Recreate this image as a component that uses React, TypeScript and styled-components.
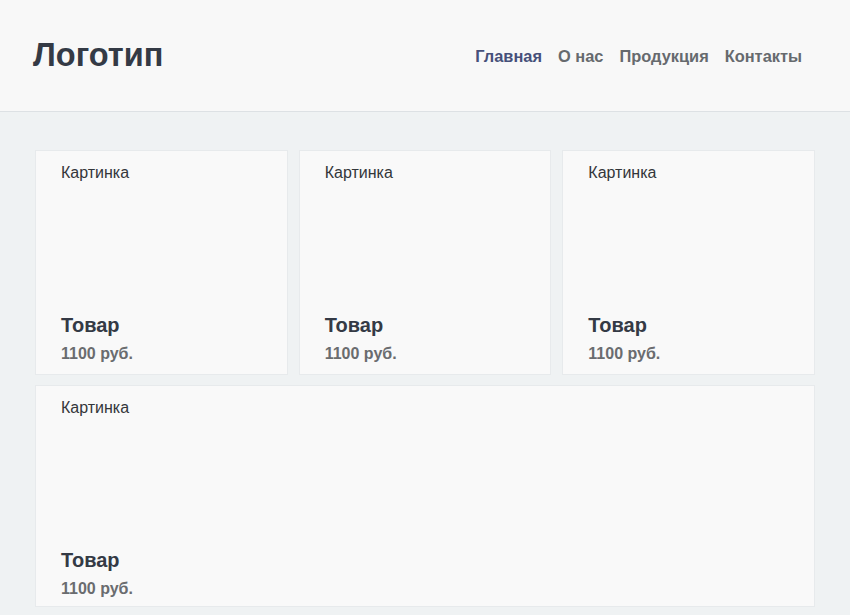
import React from "react";
import styled, { createGlobalStyle } from "styled-components";

const Global = createGlobalStyle`
  html, body { margin: 0; padding: 0; }
  body {
    background: #eff2f3;
    font-family: "Liberation Sans", Arial, Helvetica, sans-serif;
    color: #333;
  }
`;

const Header = styled.header`
  height: 111px;
  background: #f8f8f8;
  border-bottom: 1px solid #dde1e4;
  display: flex;
  align-items: center;
  justify-content: space-between;
  padding: 0 48px 0 33px;
`;

const Logo = styled.div`
  font-size: 32.5px;
  font-weight: 700;
  color: #343a45;
`;

const Nav = styled.nav`
  display: flex;
  gap: 16px;
  padding-top: 2px;
`;

const NavLink = styled.a<{ $active?: boolean }>`
  font-size: 16.4px;
  font-weight: 700;
  text-decoration: none;
  color: ${(p) => (p.$active ? "#46507a" : "#666a6e")};
`;

const Main = styled.main`
  padding: 38px 35px 8px;
  display: grid;
  grid-template-columns: repeat(3, 1fr);
  column-gap: 11px;
  row-gap: 10px;
`;

const Card = styled.div<{ $wide?: boolean }>`
  grid-column: ${(p) => (p.$wide ? "1 / -1" : "auto")};
  height: ${(p) => (p.$wide ? "222px" : "225px")};
  box-sizing: border-box;
  overflow: hidden;
  background: #f9f9f9;
  border: 1px solid #e7eaec;
  padding: 13px 25px 0;
  display: flex;
  flex-direction: column;
`;

const Picture = styled.div`
  flex: none;
  height: 150px;
  font-size: 16px;
  line-height: 18px;
  color: #33363a;
`;

const Info = styled.div`
  display: flex;
  flex-direction: column;
  gap: 8px;
`;

const Title = styled.div`
  font-size: 20px;
  line-height: 23px;
  font-weight: 700;
  color: #343a45;
`;

const Price = styled.div`
  font-size: 16px;
  line-height: 18px;
  font-weight: 700;
  color: #6a6c6f;
`;

const products = [false, false, false, true];

export default function App() {
  return (
    <>
      <Global />
      <Header>
        <Logo>Логотип</Logo>
        <Nav>
          <NavLink $active>Главная</NavLink>
          <NavLink>О нас</NavLink>
          <NavLink>Продукция</NavLink>
          <NavLink>Контакты</NavLink>
        </Nav>
      </Header>
      <Main>
        {products.map((wide, i) => (
          <Card key={i} $wide={wide}>
            <Picture>Картинка</Picture>
            <Info>
              <Title>Товар</Title>
              <Price>1100 руб.</Price>
            </Info>
          </Card>
        ))}
      </Main>
    </>
  );
}
